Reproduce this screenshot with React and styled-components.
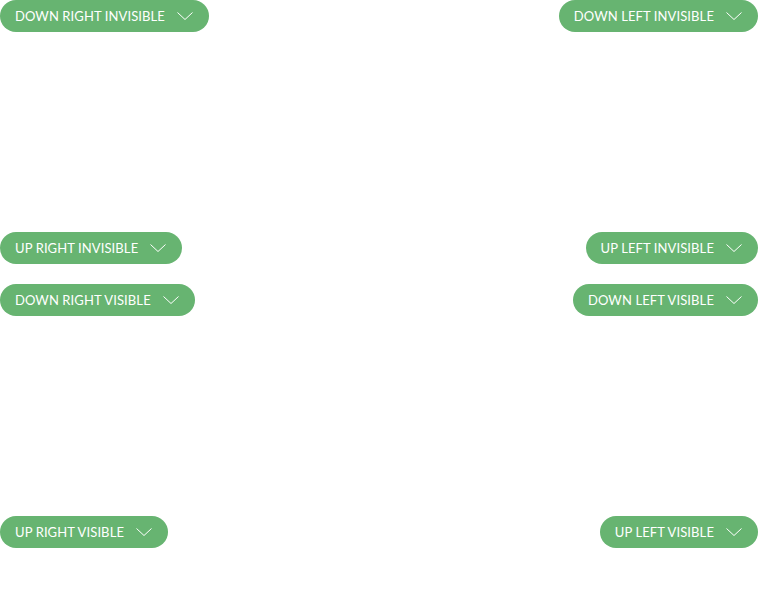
import styled, { createGlobalStyle } from "styled-components";

const GlobalStyle = createGlobalStyle`
  body {
    margin: 0;
    font-family: Lato, "Open Sans", sans-serif;
    background: #fff;
  }
`;

const Page = styled.div`
  display: flex;
  flex-direction: column;
  gap: 20px;
  padding-right: 10px;
`;

const Section = styled.div`
  height: 264px;
  display: flex;
  flex-direction: column;
  justify-content: space-between;
`;

const Row = styled.div`
  display: flex;
  justify-content: space-between;
`;

const Toggle = styled.button`
  display: flex;
  align-items: center;
  gap: 12px;
  height: 32px;
  padding: 0 16px 0 15px;
  border: none;
  border-radius: 16px;
  background: #67b471;
  color: #fff;
  font-family: Lato, "Open Sans", sans-serif;
  font-size: 13px;
  letter-spacing: 0.1px;
  text-transform: uppercase;
  cursor: pointer;
`;

const Chevron = () => (
  <svg width="16" height="8" viewBox="0 0 16 8" fill="none">
    <path d="M0.5 0.5 L8 7.5 L15.5 0.5" stroke="#fff" strokeWidth="1" />
  </svg>
);

const Dropdown = ({ label }) => (
  <Toggle>
    {label}
    <Chevron />
  </Toggle>
);

const sections = [
  [
    ["down right invisible", "down left invisible"],
    ["up right invisible", "up left invisible"],
  ],
  [
    ["down right visible", "down left visible"],
    ["up right visible", "up left visible"],
  ],
];

export default function App() {
  return (
    <>
      <GlobalStyle />
      <Page>
        {sections.map((rows, i) => (
          <Section key={i}>
            {rows.map(([left, right]) => (
              <Row key={left}>
                <Dropdown label={left} />
                <Dropdown label={right} />
              </Row>
            ))}
          </Section>
        ))}
      </Page>
    </>
  );
}
